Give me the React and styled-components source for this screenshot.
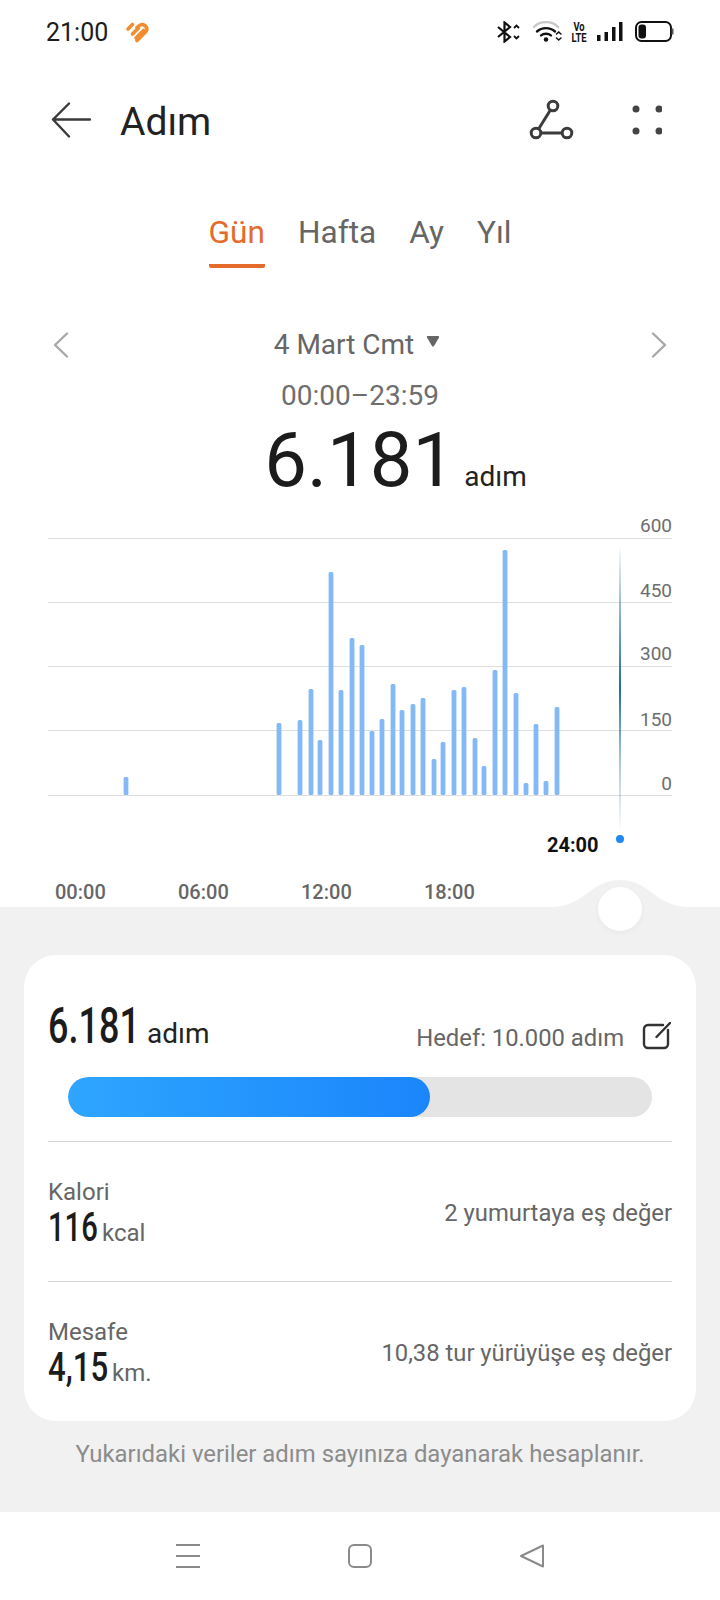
import React from "react";
import styled, { createGlobalStyle } from "styled-components";

const GlobalStyle = createGlobalStyle`
  html, body {
    margin: 0;
    padding: 0;
    background: #fff;
  }
  body {
    font-family: Roboto, "Noto Sans", sans-serif;
    color: #222;
  }
  * {
    box-sizing: border-box;
  }
`;

const bars = [
  [126, 777], [279, 723], [300, 720], [311, 689], [320, 740], [331, 572], [341, 690],
  [352, 638], [362, 645], [372, 731], [382, 719], [393, 684], [402, 710], [413, 704],
  [423, 698], [434, 759], [443, 742], [454, 690], [464, 687], [475, 738], [484, 766],
  [495, 670], [505, 550], [516, 693], [526, 783], [536, 724], [546, 781], [557, 707],
];
const gridLines = [538, 602, 666, 730, 795];
const yLabels = [["600", 532], ["450", 597], ["300", 660], ["150", 726], ["0", 790]];
const tabs = ["Gün", "Hafta", "Ay", "Yıl"];
const hours = ["00:00", "06:00", "12:00", "18:00"];

export default function App() {
  return (
    <Page>
      <GlobalStyle />
      <StatusBar>
        <StatusLeft>
          <Clock>21:00</Clock>
          <HeartLogo />
        </StatusLeft>
        <StatusIcons>
          <BluetoothIcon />
          <WifiIcon />
          <VoLte>Vo LTE</VoLte>
          <SignalIcon />
          <BatteryIcon />
        </StatusIcons>
      </StatusBar>

      <Header>
        <TitleGroup>
          <svg width="40" height="36" viewBox="0 0 40 36" fill="none" stroke="#3a3a3a" strokeWidth="2.4" strokeLinecap="round" strokeLinejoin="round">
            <path d="M39 17.5H2M18 1.5 2 17.5l16 17" />
          </svg>
          <Title>Adım</Title>
        </TitleGroup>
        <HeaderActions>
          <svg width="46" height="42" viewBox="0 0 46 42" fill="none" stroke="#3c3c3c" strokeWidth="3">
            <circle cx="24" cy="7" r="4.8" />
            <circle cx="7" cy="34" r="4.8" />
            <circle cx="38" cy="34" r="4.8" />
            <path d="M21.4 11 9.6 30M11.8 34h21.4" />
          </svg>
          <svg width="30" height="30" viewBox="0 0 30 30" fill="#444">
            <circle cx="4" cy="4" r="3.5" />
            <circle cx="27" cy="4" r="3.5" />
            <circle cx="4" cy="26" r="3.5" />
            <circle cx="27" cy="26" r="3.5" />
          </svg>
        </HeaderActions>
      </Header>

      <Tabs>
        {tabs.map((tab, index) => (
          <Tab key={tab} $active={index === 0}>{tab}</Tab>
        ))}
      </Tabs>

      <DateRow>
        <svg width="16" height="26" viewBox="0 0 16 26" fill="none" stroke="#a8a8a8" strokeWidth="2.4" strokeLinecap="round" strokeLinejoin="round">
          <path d="M14 1.5 2 13l12 11.5" />
        </svg>
        <DateLabel>
          4 Mart Cmt
          <svg width="14" height="11" viewBox="0 0 14 11" fill="#666">
            <path d="M1 1.5C.6.6 1 0 2 0h10c1 0 1.400.6 1 1.500L8 10c-.5.8-1.500.8-2 0z" />
          </svg>
        </DateLabel>
        <svg width="16" height="26" viewBox="0 0 16 26" fill="none" stroke="#a8a8a8" strokeWidth="2.4" strokeLinecap="round" strokeLinejoin="round">
          <path d="M2 1.500 14 13 2 24.500" />
        </svg>
      </DateRow>

      <TimeRange>00:00–23:59</TimeRange>
      <Total>
        <TotalValue>6.181</TotalValue>
        <TotalUnit>adım</TotalUnit>
      </Total>

      <ChartSvg width="720" height="350" viewBox="0 510 720 350">
        <defs>
          <linearGradient id="cursorLine" x1="0" y1="0" x2="0" y2="1">
            <stop offset="0" stopColor="#1f6f9f" stopOpacity="0" />
            <stop offset="0.25" stopColor="#1f6f9f" stopOpacity="0.55" />
            <stop offset="0.5" stopColor="#1f6f9f" />
            <stop offset="0.75" stopColor="#1f6f9f" stopOpacity="0.4" />
            <stop offset="1" stopColor="#1f6f9f" stopOpacity="0" />
          </linearGradient>
        </defs>
        {gridLines.map((y) => (
          <line key={y} x1="48" x2="672" y1={y + 0.5} y2={y + 0.5} stroke="#dedede" />
        ))}
        {bars.map(([x, top]) => (
          <rect key={x} x={x - 2.4} y={top} width="4.800" height={795 - top} rx="1.500" fill="#83b9f6" />
        ))}
        <rect x="619" y="544" width="2" height="288" fill="url(#cursorLine)" />
        <circle cx="620" cy="839" r="4" fill="#1e88f5" />
        {yLabels.map(([label, y]) => (
          <AxisText key={label} x="672" y={y} textAnchor="end">{label}</AxisText>
        ))}
        <CursorText x="547" y="852">24:00</CursorText>
      </ChartSvg>

      <HourRow>
        {hours.map((hour) => (
          <Hour key={hour}>{hour}</Hour>
        ))}
      </HourRow>

      <Sheet>
        <Bump width="138" height="27" viewBox="0 0 138 27">
          <path d="M0 27C34 27 39 0 69 0s35 27 69 27z" fill="#f1f1f1" />
        </Bump>
        <Knob />
        <Card>
          <Summary>
            <Reading $gap={10}>
              <Squeezed $width={89} $scale={0.72} $size={50}>6.181</Squeezed>
              <Unit $big>adım</Unit>
            </Reading>
            <Goal>
              <MutedText>Hedef: 10.000 adım</MutedText>
              <svg width="29" height="28" viewBox="0 0 29 28" fill="none" stroke="#333" strokeWidth="2.4" strokeLinecap="round" strokeLinejoin="round">
                <path d="M21 3H6a4 4 0 0 0-4 4v15a4 4 0 0 0 4 4h16a4 4 0 0 0 4-4V8" />
                <path d="M28 1 14.500 15" />
              </svg>
            </Goal>
          </Summary>
          <Track>
            <TrackFill style={{ width: "62%" }} />
          </Track>
          <Metric>
            <MetricLeft>
              <MetricLabel>Kalori</MetricLabel>
              <Reading $gap={5}>
                <Squeezed $width={49} $scale={0.73} $size={40}>116</Squeezed>
                <Unit>kcal</Unit>
              </Reading>
            </MetricLeft>
            <MutedText>2 yumurtaya eş değer</MutedText>
          </Metric>
          <Metric>
            <MetricLeft>
              <MetricLabel>Mesafe</MetricLabel>
              <Reading $gap={5}>
                <Squeezed $width={59} $scale={0.78} $size={40}>4,15</Squeezed>
                <Unit>km.</Unit>
              </Reading>
            </MetricLeft>
            <MutedText>10,38 tur yürüyüşe eş değer</MutedText>
          </Metric>
        </Card>
        <Note>Yukarıdaki veriler adım sayınıza dayanarak hesaplanır.</Note>
      </Sheet>

      <NavBar>
        <svg width="26" height="26" viewBox="0 0 26 26" stroke="#8a8a8a" strokeWidth="2">
          <path d="M1 2h24M1 13h24M1 24h24" />
        </svg>
        <svg width="26" height="26" viewBox="0 0 26 26" fill="none" stroke="#8a8a8a" strokeWidth="2">
          <rect x="2" y="2" width="22" height="22" rx="5" />
        </svg>
        <svg width="26" height="26" viewBox="0 0 26 26" fill="none" stroke="#8a8a8a" strokeWidth="2" strokeLinejoin="round">
          <path d="M24 2.500v21L2 13z" />
        </svg>
      </NavBar>
    </Page>
  );
}

function HeartLogo() {
  return (
    <svg width="24" height="22" viewBox="0 0 24 22" fill="none" stroke="#f28c2e" strokeWidth="3.600" strokeLinecap="round" strokeLinejoin="round">
      <path d="M3 8 7.500 3.500" />
      <path d="M7.500 13 13.500 7" />
      <path d="M11 17 18.500 9.500" />
      <path d="M12 19.500 21 10.500C23 8 21 3.500 17 3.500 15 3.500 13.500 5 12 6.500" />
    </svg>
  );
}

function BluetoothIcon() {
  return (
    <svg width="23" height="22" viewBox="0 0 23 22" fill="none" stroke="#111" strokeWidth="2.200">
      <path d="M1 6 13 16 7.500 20.500V1.500L13 6 1 16" />
      <path d="M17 7l2.500-2.500L22 7M17 15l2.500 2.500L22 15" strokeWidth="1.800" />
    </svg>
  );
}

function WifiIcon() {
  return (
    <svg width="29" height="22" viewBox="0 0 29 22" fill="none" strokeLinecap="round">
      <path d="M1 6C7-.500 19-.500 25 6" stroke="#c9c9c9" strokeWidth="2.400" />
      <path d="M4 10.500C9 6 17 6 22 10.500" stroke="#111" strokeWidth="2.400" />
      <path d="M8 14.500c2.500-2.400 7.500-2.400 10 0" stroke="#111" strokeWidth="2.400" />
      <circle cx="13" cy="18.500" r="2.200" fill="#111" />
      <path d="M23.500 13l2.200-2 2.200 2M23.500 17l2.200 2 2.200-2" stroke="#111" strokeWidth="1.600" />
    </svg>
  );
}

function SignalIcon() {
  return (
    <svg width="26" height="20" viewBox="0 0 26 20" fill="#111">
      <rect x="0" y="13" width="3.500" height="6" />
      <rect x="7.500" y="10" width="3.500" height="9" />
      <rect x="15" y="5" width="3.500" height="14" />
      <rect x="22" y="0" width="3.500" height="19" />
    </svg>
  );
}

function BatteryIcon() {
  return (
    <svg width="39" height="22" viewBox="0 0 39 22" fill="none">
      <rect x="1" y="1" width="35" height="19" rx="5.500" stroke="#111" strokeWidth="2" />
      <rect x="3.500" y="3.500" width="7.500" height="14" rx="3" fill="#111" />
      <path d="M37.500 7.500v6" stroke="#555" strokeWidth="2" />
    </svg>
  );
}

const Page = styled.div`
  width: 720px;
  height: 1600px;
  display: flex;
  flex-direction: column;
  overflow: hidden;
  background: #fff;
`;

const StatusBar = styled.div`
  height: 64px;
  display: flex;
  align-items: center;
  justify-content: space-between;
  padding: 0 46px;
`;

const StatusLeft = styled.div`
  display: flex;
  align-items: center;
  gap: 17px;
`;

const Clock = styled.span`
  font-size: 25px;
  color: #1c1c1c;
`;

const StatusIcons = styled.div`
  display: flex;
  align-items: center;
  gap: 12px;
  svg:nth-child(2) {
    margin-left: 1px;
  }
`;

const VoLte = styled.div`
  width: 24px;
  margin: 0 -6px 0 -7px;
  text-align: center;
  font-weight: 700;
  font-size: 13px;
  line-height: 11px;
  color: #111;
  transform: scaleX(0.72);
`;

const Header = styled.div`
  height: 112px;
  display: flex;
  align-items: center;
  justify-content: space-between;
  padding: 0 58px 0 51px;
`;

const TitleGroup = styled.div`
  display: flex;
  align-items: center;
  gap: 29px;
`;

const Title = styled.h1`
  margin: 4px 0 0;
  font-size: 39px;
  font-weight: 400;
  color: #222;
`;

const HeaderActions = styled.div`
  display: flex;
  align-items: center;
  gap: 57px;
`;

const Tabs = styled.div`
  height: 92px;
  display: flex;
  justify-content: center;
  align-items: flex-end;
  gap: 33px;
`;

const Tab = styled.div`
  height: 66px;
  padding-top: 10px;
  font-size: 31.600px;
  line-height: 42px;
  color: ${(p) => (p.$active ? "#e56b2c" : "#666")};
  border-bottom: 4px solid ${(p) => (p.$active ? "#e56b2c" : "transparent")};
  border-radius: 0 0 2px 2px;
`;

const DateRow = styled.div`
  margin-top: 63px;
  height: 27px;
  display: flex;
  align-items: center;
  justify-content: space-between;
  padding: 0 53px;
`;

const DateLabel = styled.div`
  display: flex;
  align-items: center;
  gap: 12px;
  padding-right: 6px;
  font-size: 28px;
  line-height: 28px;
  color: #666;
  svg {
    margin-top: -6px;
  }
`;

const TimeRange = styled.div`
  margin-top: 21px;
  text-align: center;
  font-size: 28px;
  line-height: 34px;
  color: #6e6e6e;
`;

const Total = styled.div`
  height: 76px;
  margin-top: 9px;
  display: flex;
  justify-content: center;
  align-items: baseline;
  gap: 9px;
  padding-left: 71px;
`;

const TotalValue = styled.span`
  font-size: 76px;
  line-height: 76px;
  color: #1c1c1c;
`;

const TotalUnit = styled.span`
  font-size: 28px;
  color: #222;
`;

const ChartSvg = styled.svg`
  display: block;
  flex: none;
  margin-top: 12px;
`;

const AxisText = styled.text`
  font-family: Roboto, sans-serif;
  font-size: 19px;
  fill: #6e6e6e;
`;

const CursorText = styled.text`
  font-family: Roboto, sans-serif;
  font-size: 20px;
  font-weight: 700;
  fill: #111;
`;

const HourRow = styled.div`
  height: 47px;
  display: flex;
  padding: 20px 0 0 55px;
`;

const Hour = styled.span`
  width: 123px;
  font-size: 20px;
  line-height: 24px;
  font-weight: 500;
  color: #666;
`;

const Sheet = styled.div`
  position: relative;
  flex: 1;
  background: #f1f1f1;
  padding: 48px 24px 0;
`;

const Bump = styled.svg`
  position: absolute;
  left: 551px;
  top: -27px;
`;

const Knob = styled.div`
  position: absolute;
  left: 598px;
  top: -20px;
  width: 44px;
  height: 44px;
  border-radius: 50%;
  background: #fff;
  box-shadow: 0 2px 6px rgba(0, 0, 0, 0.04);
`;

const Card = styled.div`
  height: 466px;
  background: #fff;
  border-radius: 32px;
  padding: 0 24px;
`;

const Summary = styled.div`
  height: 122px;
  display: flex;
  align-items: flex-end;
  justify-content: space-between;
  padding-bottom: 25px;
`;

const Reading = styled.div`
  display: flex;
  align-items: baseline;
  gap: ${(p) => p.$gap}px;
`;

const Squeezed = styled.span`
  display: inline-block;
  width: ${(p) => p.$width}px;
  font-size: ${(p) => p.$size}px;
  line-height: 1.050;
  font-weight: 500;
  white-space: nowrap;
  color: #1c1c1c;
  transform: scaleX(${(p) => p.$scale});
  transform-origin: left;
`;

const Unit = styled.span`
  font-size: ${(p) => (p.$big ? "28px" : "24px")};
  color: ${(p) => (p.$big ? "#222" : "#666")};
`;

const Goal = styled.div`
  display: flex;
  align-items: center;
  gap: 18px;
  margin-right: 1px;
  svg {
    margin-top: -3px;
  }
`;

const MutedText = styled.span`
  margin-top: 2px;
  font-size: 23.800px;
  color: #666;
`;

const Track = styled.div`
  height: 40px;
  margin: 0 20px 24px;
  border-radius: 20px;
  background: #e4e4e4;
  overflow: hidden;
`;

const TrackFill = styled.div`
  height: 100%;
  border-radius: 20px;
  background: linear-gradient(90deg, #2ea6ff, #1b85fb);
`;

const Metric = styled.div`
  height: 140px;
  display: flex;
  align-items: center;
  justify-content: space-between;
  border-top: 1px solid #d4d4d4;
`;

const MetricLeft = styled.div`
  display: flex;
  flex-direction: column;
  padding-top: 3px;
`;

const MetricLabel = styled.span`
  font-size: 24px;
  line-height: 29px;
  color: #666;
`;

const Note = styled.div`
  margin-top: 18px;
  text-align: center;
  font-size: 23.900px;
  line-height: 30px;
  color: #8c8c8c;
`;

const NavBar = styled.div`
  height: 88px;
  display: flex;
  align-items: center;
  justify-content: center;
  gap: 146px;
  background: #fff;
`;
